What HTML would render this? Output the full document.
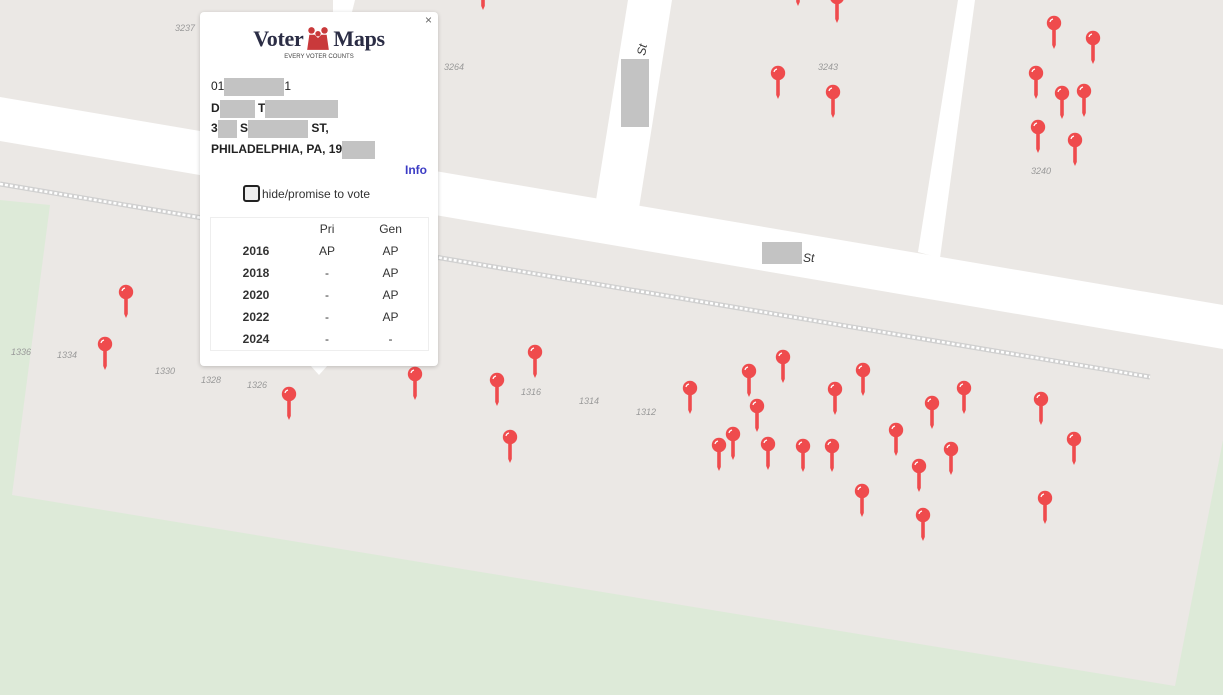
<!DOCTYPE html>
<html><head><meta charset="utf-8"><style>
html,body{margin:0;padding:0;width:1223px;height:695px;overflow:hidden;background:#ebe8e5;font-family:"Liberation Sans",Arial,sans-serif}
svg.map{position:absolute;left:0;top:0}
.pop{position:absolute;left:200px;top:12px;width:238px;height:354px;background:#fff;border-radius:4px;box-shadow:0 1px 4px rgba(0,0,0,.2)}
.arrow{position:absolute;left:310px;top:365px;width:0;height:0;border-left:9px solid transparent;border-right:9px solid transparent;border-top:10px solid #fff}
.x{position:absolute;right:6px;top:1px;font-size:12px;color:#666}
.logo{position:absolute;left:0;width:238px;top:14px;text-align:center;font-family:"Liberation Serif",serif;font-weight:bold;font-size:22px;color:#2b2d45;letter-spacing:-0.3px}
.tag{position:absolute;left:0;width:238px;top:42px;text-align:center;font-size:6px;color:#444}
.ln{position:absolute;left:11px;font-size:12px;color:#222;height:18px;line-height:18px}
.r{display:inline-block;background:#c3c3c3;height:18px;vertical-align:middle}
.info{position:absolute;right:11px;top:151px;color:#3b3bc4;font-weight:bold;font-size:12px}
.cb{position:absolute;left:43px;top:173px;width:13px;height:13px;border:2px solid #222;border-radius:3px;background:#eee}
.cbl{position:absolute;left:62px;top:175px;font-size:12px;color:#333}
table{position:absolute;left:10px;top:205px;width:219px;height:134px;border:1px solid #eee;border-collapse:collapse;font-size:12px;color:#333}
td{text-align:center;padding:0;height:22px}
td.y{font-weight:bold;width:90px}
.lbl{font-style:italic;font-size:9px;fill:#999;font-family:"Liberation Sans",sans-serif}
</style></head><body>
<svg class="map" width="1223" height="695" viewBox="0 0 1223 695">
<defs>
<g id="p"><path d="M-1.8 6 L1.8 6 L1.8 22 L0 26 L-1.8 22 Z" fill="#ef4b4d"/><circle r="7.2" fill="#ef4b4d"/><path d="M-4 -1 A4 4 0 0 1 -1 -4" stroke="#fff" stroke-width="1.2" fill="none"/></g>
</defs>
<rect width="1223" height="695" fill="#ebe8e5"/>
<polygon points="0,200 50,205 12,495 1175,686 1223,440 1223,695 0,695" fill="#ddead8"/>
<polygon points="0,97 1223,305 1223,349 0,141" fill="#fff"/>
<polygon points="628,0 672,0 639,208 596,200" fill="#fff"/>
<polygon points="958,0 975,0 940,258 918,252" fill="#fff"/>
<polygon points="333,0 355,0 352,12 333,12" fill="#fff"/>
<line x1="0" y1="184" x2="1150" y2="377" stroke="#d0d0d0" stroke-width="5"/>
<line x1="0" y1="184" x2="1150" y2="377" stroke="#fff" stroke-width="2.5" stroke-dasharray="3 2"/>
<rect x="621" y="59" width="28" height="68" fill="#c3c3c3"/>
<text x="0" y="0" transform="translate(645,56) rotate(-80)" font-size="12" font-style="italic" fill="#333">St</text>
<rect x="762" y="242" width="40" height="22" fill="#c3c3c3"/>
<text x="803" y="262" font-size="12" font-style="italic" fill="#333">St</text>
<text class="lbl" x="175" y="31">3237</text>
<text class="lbl" x="444" y="70">3264</text>
<text class="lbl" x="818" y="70">3243</text>
<text class="lbl" x="1031" y="174">3240</text>
<text class="lbl" x="11" y="355">1336</text>
<text class="lbl" x="57" y="358">1334</text>
<text class="lbl" x="155" y="374">1330</text>
<text class="lbl" x="201" y="383">1328</text>
<text class="lbl" x="247" y="388">1326</text>
<text class="lbl" x="521" y="395">1316</text>
<text class="lbl" x="579" y="404">1314</text>
<text class="lbl" x="636" y="415">1312</text>
<use href="#p" x="126" y="292"/><use href="#p" x="105" y="344"/><use href="#p" x="289" y="394"/>
<use href="#p" x="415" y="374"/><use href="#p" x="497" y="380"/><use href="#p" x="535" y="352"/>
<use href="#p" x="510" y="437"/><use href="#p" x="690" y="388"/><use href="#p" x="749" y="371"/>
<use href="#p" x="783" y="357"/><use href="#p" x="757" y="406"/><use href="#p" x="733" y="434"/>
<use href="#p" x="719" y="445"/><use href="#p" x="768" y="444"/><use href="#p" x="803" y="446"/>
<use href="#p" x="832" y="446"/><use href="#p" x="835" y="389"/><use href="#p" x="863" y="370"/>
<use href="#p" x="896" y="430"/><use href="#p" x="932" y="403"/><use href="#p" x="964" y="388"/>
<use href="#p" x="951" y="449"/><use href="#p" x="919" y="466"/><use href="#p" x="862" y="491"/>
<use href="#p" x="923" y="515"/><use href="#p" x="1041" y="399"/><use href="#p" x="1074" y="439"/>
<use href="#p" x="1045" y="498"/><use href="#p" x="778" y="73"/><use href="#p" x="833" y="92"/>
<use href="#p" x="837" y="-3"/><use href="#p" x="798" y="-20"/><use href="#p" x="1054" y="23"/>
<use href="#p" x="1093" y="38"/><use href="#p" x="1036" y="73"/><use href="#p" x="1062" y="93"/>
<use href="#p" x="1084" y="91"/><use href="#p" x="1038" y="127"/><use href="#p" x="1075" y="140"/>
<use href="#p" x="483" y="-16"/>
</svg>
<div class="arrow"></div>
<div class="pop">
<div class="x">×</div>
<div class="logo">Voter<svg width="26" height="24" viewBox="0 0 24 22" style="vertical-align:-4px;margin:0 2px"><circle cx="6" cy="4" r="3" fill="#c9393b"/><circle cx="18" cy="4" r="3" fill="#c9393b"/><circle cx="12" cy="7" r="2.5" fill="#c9393b"/><path d="M2 22 L4 8 L9 8 L12 11 L15 8 L20 8 L22 22 Z" fill="#c9393b"/></svg>Maps</div>
<div class="tag">EVERY VOTER COUNTS</div>
<div class="ln" style="top:65px">01<span class="r" style="width:60px"></span>1</div>
<div class="ln" style="top:87px;font-weight:bold">D<span class="r" style="width:35px"></span>&nbsp;T<span class="r" style="width:73px"></span></div>
<div class="ln" style="top:107px;font-weight:bold">3<span class="r" style="width:19px"></span>&nbsp;S<span class="r" style="width:60px"></span>&nbsp;ST,</div>
<div class="ln" style="top:128px;font-weight:bold">PHILADELPHIA, PA, 19<span class="r" style="width:33px"></span></div>
<div class="info">Info</div>
<div class="cb"></div><div class="cbl">hide/promise to vote</div>
<table>
<tr><td class="y"></td><td>Pri</td><td>Gen</td></tr>
<tr><td class="y">2016</td><td>AP</td><td>AP</td></tr>
<tr><td class="y">2018</td><td>-</td><td>AP</td></tr>
<tr><td class="y">2020</td><td>-</td><td>AP</td></tr>
<tr><td class="y">2022</td><td>-</td><td>AP</td></tr>
<tr><td class="y">2024</td><td>-</td><td>-</td></tr>
</table>
</div>
</body></html>
